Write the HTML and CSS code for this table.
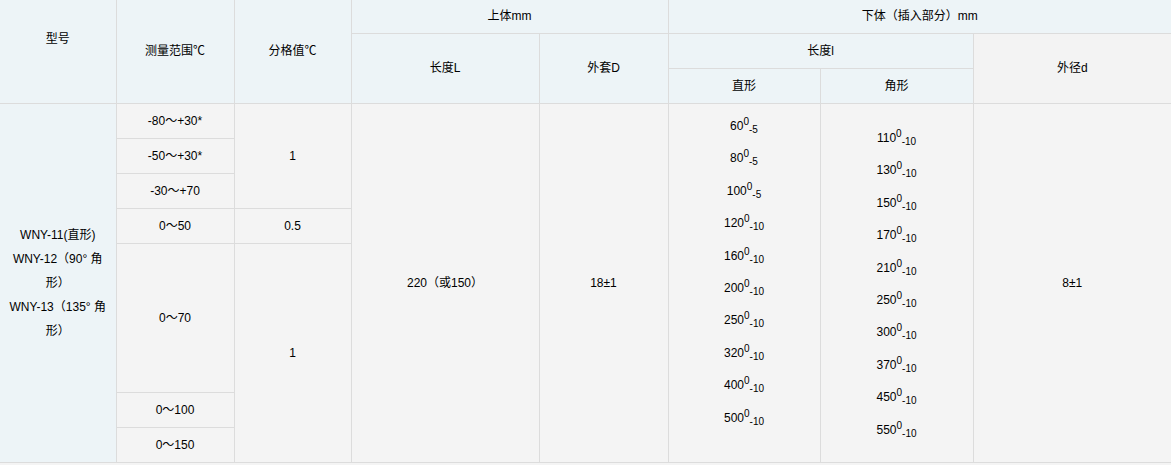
FILE: index.html
```html
<!DOCTYPE html>
<html lang="zh">
<head>
<meta charset="utf-8">
<title>WNY 温度计规格</title>
<link rel="stylesheet" href="styles.css">
</head>
<body>
<table class="spec">
  <colgroup>
    <col class="c-model"><col class="c-range"><col class="c-div"><col class="c-len"><col class="c-outer"><col class="c-straight"><col class="c-angle"><col class="c-dia">
  </colgroup>
  <thead>
    <tr class="h1">
      <th rowspan="3" class="first model-h">型号</th>
      <th rowspan="3">测量范围℃</th>
      <th rowspan="3">分格值℃</th>
      <th colspan="2">上体mm</th>
      <th colspan="3" class="last">下体（插入部分）mm</th>
    </tr>
    <tr class="h2">
      <th rowspan="2">长度L</th>
      <th rowspan="2">外套D</th>
      <th colspan="2">长度l</th>
      <th rowspan="2" class="last grey">外径d</th>
    </tr>
    <tr class="h3">
      <th>直形</th>
      <th>角形</th>
    </tr>
  </thead>
  <tbody>
    <tr class="r">
      <td rowspan="7" class="first model">WNY-11(直形)<br>WNY-12（90° 角<br>形）<br>WNY-13（135° 角<br>形）</td>
      <td>-80～+30*</td>
      <td rowspan="3">1</td>
      <td rowspan="7">220（或150）</td>
      <td rowspan="7">18±1</td>
      <td rowspan="7" class="list straight">
        <div>60<sup>0</sup><sub>-5</sub></div>
        <div>80<sup>0</sup><sub>-5</sub></div>
        <div>100<sup>0</sup><sub>-5</sub></div>
        <div>120<sup>0</sup><sub>-10</sub></div>
        <div>160<sup>0</sup><sub>-10</sub></div>
        <div>200<sup>0</sup><sub>-10</sub></div>
        <div>250<sup>0</sup><sub>-10</sub></div>
        <div>320<sup>0</sup><sub>-10</sub></div>
        <div>400<sup>0</sup><sub>-10</sub></div>
        <div>500<sup>0</sup><sub>-10</sub></div>
      </td>
      <td rowspan="7" class="list angle">
        <div>110<sup>0</sup><sub>-10</sub></div>
        <div>130<sup>0</sup><sub>-10</sub></div>
        <div>150<sup>0</sup><sub>-10</sub></div>
        <div>170<sup>0</sup><sub>-10</sub></div>
        <div>210<sup>0</sup><sub>-10</sub></div>
        <div>250<sup>0</sup><sub>-10</sub></div>
        <div>300<sup>0</sup><sub>-10</sub></div>
        <div>370<sup>0</sup><sub>-10</sub></div>
        <div>450<sup>0</sup><sub>-10</sub></div>
        <div>550<sup>0</sup><sub>-10</sub></div>
      </td>
      <td rowspan="7" class="last">8±1</td>
    </tr>
    <tr class="r"><td>-50～+30*</td></tr>
    <tr class="r"><td>-30～+70</td></tr>
    <tr class="r"><td>0～50</td><td>0.5</td></tr>
    <tr class="r big"><td>0～70</td><td rowspan="3">1</td></tr>
    <tr class="r"><td>0～100</td></tr>
    <tr class="r"><td>0～150</td></tr>
  </tbody>
</table>
</body>
</html>
```

FILE: styles.css
```css
html, body {
  margin: 0;
  padding: 0;
  background: #f4f4f4;
}

body {
  font-family: "Liberation Sans", "Noto Sans CJK SC", sans-serif;
  font-size: 12px;
  color: #000;
}

.spec {
  width: 1171px;
  table-layout: fixed;
  border-collapse: collapse;
  border: none;
}

.c-model { width: 116px; }
.c-range { width: 118px; }
.c-div { width: 117px; }
.c-len { width: 188px; }
.c-outer { width: 129px; }
.c-straight { width: 152px; }
.c-angle { width: 153px; }
.c-dia { width: 198px; }

.spec th,
.spec td {
  border: 1px solid #dcdcdc;
  padding: 0;
  text-align: center;
  vertical-align: middle;
  font-weight: normal;
  line-height: 24px;
}

.spec th {
  background: #edf4f7;
}

.spec thead tr.h1 th { border-top: none; }
.spec .first { border-left: none; }
.spec .last { border-right: none; }

.spec th.grey { background: #f3f3f3; }

.spec td { background: #f4f4f4; }
.spec td.model { background: #edf4f7; }

.h1 { height: 33px; }
.h2 { height: 35px; }
.h3 { height: 35px; }

.r { height: 35px; }
.r.big { height: 149px; }

.spec th.model-h { padding-bottom: 24px; }

.list div {
  line-height: 32.4px;
  height: 32.4px;
}

.spec td.list.straight { padding-bottom: 21px; }
.spec td.list.angle { padding-top: 3px; }

.list sup,
.list sub {
  font-size: 10px;
  line-height: 0;
}
.list sup { vertical-align: 5px; }
.list sub { vertical-align: -3px; }
```
